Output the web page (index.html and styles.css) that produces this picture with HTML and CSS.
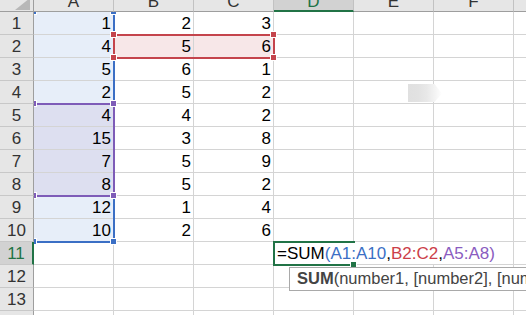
FILE: index.html
```html
<!DOCTYPE html>
<html lang="en">
<head>
<meta charset="utf-8">
<title>Sheet1</title>
<link rel="stylesheet" href="styles.css">
</head>
<body>
<div class="ws">
  <div class="grid">
    <div class="corner"></div>
    <div class="colhd">A</div><div class="colhd">B</div><div class="colhd">C</div><div class="colhd on">D</div><div class="colhd">E</div><div class="colhd">F</div><div class="colhd">G</div>

    <div class="rowhd">1</div><div class="cell sel-a">1</div><div class="cell">2</div><div class="cell">3</div><div class="cell"></div><div class="cell"></div><div class="cell"></div><div class="cell"></div>
    <div class="rowhd">2</div><div class="cell sel-a">4</div><div class="cell sel-r">5</div><div class="cell sel-r">6</div><div class="cell"></div><div class="cell"></div><div class="cell"></div><div class="cell"></div>
    <div class="rowhd">3</div><div class="cell sel-a">5</div><div class="cell">6</div><div class="cell">1</div><div class="cell"></div><div class="cell"></div><div class="cell"></div><div class="cell"></div>
    <div class="rowhd">4</div><div class="cell sel-a">2</div><div class="cell">5</div><div class="cell">2</div><div class="cell"></div><div class="cell"></div><div class="cell"></div><div class="cell"></div>
    <div class="rowhd">5</div><div class="cell sel-p">4</div><div class="cell">4</div><div class="cell">2</div><div class="cell"></div><div class="cell"></div><div class="cell"></div><div class="cell"></div>
    <div class="rowhd">6</div><div class="cell sel-p">15</div><div class="cell">3</div><div class="cell">8</div><div class="cell"></div><div class="cell"></div><div class="cell"></div><div class="cell"></div>
    <div class="rowhd">7</div><div class="cell sel-p">7</div><div class="cell">5</div><div class="cell">9</div><div class="cell"></div><div class="cell"></div><div class="cell"></div><div class="cell"></div>
    <div class="rowhd">8</div><div class="cell sel-p">8</div><div class="cell">5</div><div class="cell">2</div><div class="cell"></div><div class="cell"></div><div class="cell"></div><div class="cell"></div>
    <div class="rowhd">9</div><div class="cell sel-a">12</div><div class="cell">1</div><div class="cell">4</div><div class="cell"></div><div class="cell"></div><div class="cell"></div><div class="cell"></div>
    <div class="rowhd">10</div><div class="cell sel-a">10</div><div class="cell">2</div><div class="cell">6</div><div class="cell"></div><div class="cell"></div><div class="cell"></div><div class="cell"></div>
    <div class="rowhd on">11</div><div class="cell"></div><div class="cell"></div><div class="cell"></div><div class="cell"></div><div class="cell"></div><div class="cell"></div><div class="cell"></div>
    <div class="rowhd">12</div><div class="cell"></div><div class="cell"></div><div class="cell"></div><div class="cell"></div><div class="cell"></div><div class="cell"></div><div class="cell"></div>
    <div class="rowhd">13</div><div class="cell"></div><div class="cell"></div><div class="cell"></div><div class="cell"></div><div class="cell"></div><div class="cell"></div><div class="cell"></div>
    <div class="rowhd">14</div><div class="cell"></div><div class="cell"></div><div class="cell"></div><div class="cell"></div><div class="cell"></div><div class="cell"></div><div class="cell"></div>
  </div>

  <!-- range outlines, active cell and in-cell editor, drawn over the cell area -->
  <div class="marks">
    <div class="rng rng-a"></div>
    <div class="knob knob-a" style="left:-3px;top:-3px"></div>
    <div class="knob knob-a" style="left:77px;top:-3px"></div>
    <div class="knob knob-a" style="left:-3px;top:227px"></div>
    <div class="knob knob-a" style="left:77px;top:227px"></div>

    <div class="rng rng-p"></div>
    <div class="knob knob-p" style="left:-3px;top:89px"></div>
    <div class="knob knob-p" style="left:77px;top:89px"></div>
    <div class="knob knob-p" style="left:-3px;top:181px"></div>
    <div class="knob knob-p" style="left:77px;top:181px"></div>

    <div class="rng rng-r"></div>
    <div class="knob knob-r" style="left:77px;top:20px"></div>
    <div class="knob knob-r" style="left:237px;top:20px"></div>
    <div class="knob knob-r" style="left:77px;top:43px"></div>
    <div class="knob knob-r" style="left:237px;top:43px"></div>

    <div class="ghost"></div>

    <div class="active"></div>
    <div class="editor">=SUM<span class="ref-a">(A1:A10</span>,<span class="ref-r">B2:C2</span>,<span class="ref-p">A5:A8)</span></div>
    <div class="knob knob-g" style="left:317px;top:250px"></div>

    <div class="tip"><b>SUM</b>(number1, [number2], [number3], ...)</div>
  </div>
</div>
</body>
</html>
```

FILE: styles.css
```css
html, body {
  margin: 0;
  padding: 0;
  background: #fff;
  overflow: hidden;
}

body {
  width: 526px;
  height: 315px;
  font-family: "Liberation Sans", Arial, sans-serif;
}

.ws {
  position: relative;
  width: 594px;
  margin-top: -11px;
}

.grid {
  display: grid;
  grid-template-columns: 34px repeat(7, 80px);
  grid-auto-rows: 23px;
}

.grid > div {
  box-sizing: border-box;
  font-size: 17px;
  line-height: 22px;
  white-space: nowrap;
}

/* headers */
.corner {
  position: relative;
  background: #e6e6e6;
  border-right: 1px solid #9e9e9e;
  border-bottom: 1px solid #9e9e9e;
}

.corner::after {
  content: "";
  position: absolute;
  right: 3px;
  bottom: 1px;
  width: 15px;
  height: 12px;
  background: #b8b8b8;
  clip-path: polygon(100% 0, 100% 100%, 0 100%);
}

.colhd {
  background: #e6e6e6;
  border-right: 1px solid #c2c2c2;
  border-bottom: 1px solid #9e9e9e;
  text-align: center;
  padding-top: 2px;
  color: #333;
}

.colhd.on {
  background: #d2d2d2;
  border-bottom: 2px solid #217346;
  color: #217346;
}

.rowhd {
  background: #e6e6e6;
  border-right: 1px solid #9e9e9e;
  border-bottom: 1px solid #c8c8c8;
  text-align: center;
  padding-top: 1px;
  color: #333;
}

.rowhd.on {
  background: #d2d2d2;
  border-right: 2px solid #217346;
  color: #217346;
}

/* cells */
.cell {
  border-right: 1px solid #d4d4d4;
  border-bottom: 1px solid #d4d4d4;
  text-align: right;
  padding: 1px 2px 0 0;
  color: #000;
}

.sel-a { background: #e7eef9; }
.sel-p { background: #dddff0; }
.sel-r { background: #f7e7e8; }

/* overlay layer */
.marks {
  position: absolute;
  left: 34px;
  top: 23px;
  right: 0;
  bottom: 0;
  overflow: hidden;
  pointer-events: none;
}

.marks > div {
  position: absolute;
  box-sizing: border-box;
}

.rng-a {
  left: -1px;
  top: -1px;
  width: 82px;
  height: 232px;
  border-right: 2px solid #3b6fc5;
  border-bottom: 2px solid #3b6fc5;
}

.rng-p {
  left: -1px;
  top: 91px;
  width: 82px;
  height: 94px;
  border-top: 2px solid #7e5cb8;
  border-right: 2px solid #7e5cb8;
  border-bottom: 2px solid #7e5cb8;
}

.rng-r {
  left: 79px;
  top: 22px;
  width: 162px;
  height: 25px;
  border: 2px solid #c4444c;
}

.knob {
  width: 5px;
  height: 5px;
  box-shadow: 0 0 0 1px #fff;
}

.knob-a { background: #3b6fc5; }
.knob-p { background: #7e5cb8; }
.knob-r { background: #c4444c; }
.knob-g { background: #217346; }

/* faint drag shadow left on the sheet */
.ghost {
  left: 374px;
  top: 72px;
  width: 34px;
  height: 19px;
  background: linear-gradient(to right, #e0e0e0 0%, #e2e2e2 30%, #e8e8e8 55%, #f4f4f4 80%, rgba(255, 255, 255, 0) 100%);
  clip-path: polygon(0 0, 78% 0, 100% 50%, 78% 95%, 0 95%);
}

.active {
  left: 239px;
  top: 229px;
  width: 82px;
  height: 25px;
  border: 2px solid #217346;
}

.editor {
  left: 241px;
  top: 231px;
  width: 225px;
  height: 21px;
  padding-left: 2px;
  background: #fff;
  font-size: 17px;
  line-height: 21px;
  color: #000;
  white-space: nowrap;
}

.ref-a { color: #3b6fc5; }
.ref-r { color: #cc3f4a; }
.ref-p { color: #8a5cc0; }

.tip {
  left: 255px;
  top: 255px;
  width: 290px;
  height: 24px;
  padding-left: 7px;
  border: 1px solid #a9a9a9;
  background: #fff;
  font-size: 16.5px;
  line-height: 21px;
  color: #444;
  white-space: nowrap;
}

.tip b {
  color: #444;
}
```
